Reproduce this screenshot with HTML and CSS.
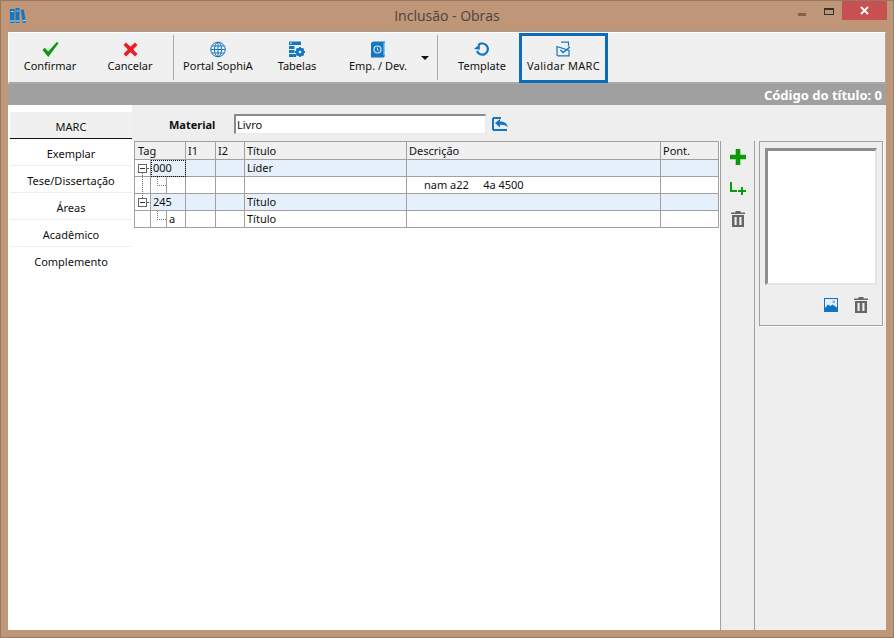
FILE: index.html
```html
<!DOCTYPE html>
<html lang="pt">
<head>
<meta charset="utf-8">
<title>Inclusão - Obras</title>
<link rel="stylesheet" href="styles.css">
</head>
<body>
<div class="window">
  <header class="titlebar">
    <svg class="app-icon" width="16" height="16" viewBox="0 0 16 16"><path fill="#1577c2" d="M0 1h4.500v14H0zM5.500 0H9.500v15H5.500zM10.800 2l3-.5 2.200 13-3.200.5z"/><path fill="#bfe0f5" d="M0 12.500h4.500v1H0zM5.500 12.500h4v1h-4zM12.500 12.300l3.200-.5.200 1-3.200.5zM1 3h2.500v1H1zM6.500 2.500h2v1h-2z"/></svg>
    <div class="title">Inclusão - Obras</div>
    <div class="controls">
      <span class="ctl-min"></span>
      <span class="ctl-max"></span>
      <span class="ctl-close"><svg width="9" height="9" viewBox="0 0 9 9"><path d="M1 1l7 7M8 1l-7 7" stroke="#fff" stroke-width="1.800"/></svg></span>
    </div>
  </header>
  <div class="client">
    <nav class="toolbar">
      <button class="tb w80"><svg width="17" height="17" viewBox="0 0 17 17"><path fill="#0a9a0a" d="M0.500 9l2.300-2.200 3.400 3.600L15 .8l1.500 1.400L6.300 16z"/></svg><span>Confirmar</span></button>
      <button class="tb w80"><svg width="15" height="15" viewBox="0 0 15 15"><path fill="#ee1c25" d="M3 .5l4.500 4.300L12 .5 14.500 3 10.200 7.500l4.300 4.500-2.500 2.500-4.500-4.300L3 14.500.5 12l4.300-4.500L.5 3z"/></svg><span>Cancelar</span></button>
      <i class="sep"></i>
      <button class="tb w80"><svg width="16" height="16" viewBox="0 0 16 16" fill="none" stroke="#1577c2" stroke-width="1"><circle cx="8" cy="8" r="7.300"/><ellipse cx="8" cy="8" rx="3.500" ry="7.300"/><path d="M8 .7v14.600M.7 8h14.600M1.800 4.500h12.400M1.800 11.500h12.400"/></svg><span>Portal SophiA</span></button>
      <button class="tb w78"><svg width="16" height="16" viewBox="0 0 16 16"><path fill="#1577c2" d="M0 0h12v3.500H0zM0 4.500h5.500V7.500H0zM0 8.500h5.500v3H0zM0 12.500h7v3H0z"/><path fill="#cfe6f6" d="M1 1h2v1H1z"/><circle cx="11" cy="10.500" r="3" fill="none" stroke="#1577c2" stroke-width="2.400"/><path stroke="#1577c2" stroke-width="1.800" d="M11 5.500v10M6 10.500h10M7.500 7l7 7M14.500 7l-7 7"/><circle cx="11" cy="10.500" r="1.300" fill="#f0f0f0"/></svg><span>Tabelas</span></button>
      <button class="tb w84"><svg width="14" height="16" viewBox="0 0 14 16"><path fill="#1577c2" d="M0 1.500L2 0h12v14l-1 2H0z"/><path fill="#8fc4ea" d="M12.500 1H14v13h-1.500z"/><circle cx="6.500" cy="8" r="3.500" fill="none" stroke="#cfe6f6" stroke-width="1.200"/><path stroke="#cfe6f6" d="M6.500 6v2.500H8"/></svg><span>Emp. / Dev.</span></button>
      <i class="caret"></i>
      <i class="sep sep-b"></i>
      <button class="tb tmpl"><svg width="16" height="16" viewBox="0 0 16 16" fill="none"><path d="M4.300 3.600A5.600 5.600 0 1 1 3 9.500" stroke="#1577c2" stroke-width="2.200"/><path fill="#1577c2" d="M0 7.500L5.800 2.500v5.800z"/></svg><span>Template</span></button>
      <button class="tb validar"><svg width="16" height="16" viewBox="0 0 16 16" fill="none" stroke="#1577c2" stroke-width="1.200"><path d="M5 .7h7.500v4.300M13 9v5.300H2a1 1 0 0 1-1-1V5z"/><path d="M4.500 8.500l2.500 2.500L14 5.500" stroke-width="1.500"/></svg><span>Validar MARC</span></button>
    </nav>
    <div class="codebar">Código do título: 0</div>
    <div class="body">
      <aside class="tabs">
        <div class="tab active">MARC</div>
        <div class="tab">Exemplar</div>
        <div class="tab">Tese/Dissertação</div>
        <div class="tab">Áreas</div>
        <div class="tab">Acadêmico</div>
        <div class="tab">Complemento</div>
      </aside>
      <main class="main">
        <div class="material">
          <label class="mat-label">Material</label>
          <div class="mat-input">Livro</div>
          <svg class="mat-icon" width="17" height="14" viewBox="0 0 17 14"><path fill="none" stroke="#1577c2" stroke-width="2" d="M1 1h8M1 1v12M1 13h14"/><path fill="#1577c2" d="M3 6l5-4v2.500c4 0 7 1.500 8 6-1.500-2-4-2.800-8-2.600V10.500z"/></svg>
        </div>
        <div class="workarea">
          <div class="gridwrap">
            <table class="grid">
              <colgroup><col class="c0"><col class="c1"><col class="c2"><col class="c3"><col class="c4"><col class="c5"><col class="c6"><col class="c7"></colgroup>
              <thead>
                <tr><th colspan="3">Tag</th><th>I1</th><th>I2</th><th>Título</th><th>Descrição</th><th>Pont.</th></tr>
              </thead>
              <tbody>
                <tr class="parent"><td class="tree"><span class="expander"></span></td><td colspan="2" class="focus"><span>000</span></td><td></td><td></td><td>Líder</td><td></td><td></td></tr>
                <tr><td></td><td class="branch"></td><td></td><td></td><td></td><td></td><td class="desc">nam a22&nbsp;&nbsp;&nbsp;&nbsp;&nbsp;4a 4500</td><td></td></tr>
                <tr class="parent"><td class="tree"><span class="expander"></span></td><td colspan="2">245</td><td></td><td></td><td>Título</td><td></td><td></td></tr>
                <tr><td></td><td class="branch"></td><td class="sub">a</td><td></td><td></td><td>Título</td><td></td><td></td></tr>
              </tbody>
            </table>
            <i class="tree-line"></i>
          </div>
          <div class="actions">
            <svg width="16" height="16" viewBox="0 0 16 16"><path fill="#0a9a0a" d="M5.700 0h4.600v5.700H16v4.600h-5.700V16H5.700v-5.700H0V5.700h5.700z"/></svg>
            <svg class="act-child" width="16" height="13" viewBox="0 0 16 13"><path fill="#0a9a0a" d="M0 0h2v8h5v2H0zM11 5h2v3h3v2h-3v3h-2v-3H8V8h3z"/></svg>
            <svg class="act-trash" width="14" height="16" viewBox="0 0 14 16"><path fill="#666" d="M4.500 0h5v1.500H14V3H0V1.500h4.500zM1 4h12v12H1zM3.500 6v8h2.200V6zm4.800 0v8h2.200V6z"/></svg>
          </div>
          <div class="side">
            <div class="photo-box">
              <div class="photo"></div>
              <div class="photo-actions">
                <svg width="14" height="14" viewBox="0 0 14 14"><rect width="14" height="14" fill="#0f73c4"/><rect x="1" y="1" width="12" height="12" fill="#e3f0fa"/><path fill="#0f73c4" d="M1 10l3-3.500 2.500 1.500 2-1.500 4.500 3V13H1z"/><rect x="8.500" y="2.500" width="2.500" height="2.500" fill="#7fb4de"/></svg>
                <svg width="14" height="16" viewBox="0 0 14 16"><path fill="#666" d="M4.500 0h5v1.500H14V3H0V1.500h4.500zM1 4h12v12H1zM3.500 6v8h2.200V6zm4.800 0v8h2.200V6z"/></svg>
              </div>
            </div>
          </div>
        </div>
      </main>
    </div>
  </div>
</div>
</body>
</html>
```
FILE: styles.css
```css
* { box-sizing: border-box; }
html, body { margin: 0; height: 100%; }
body { font-family: "Noto Sans", "Liberation Sans", sans-serif; font-size: 11px; color: #101010; overflow: hidden; }
.window { width: 894px; height: 638px; background: #bf9677; border: 1px solid #98785f; display: flex; flex-direction: column; }
.titlebar { height: 30px; flex: none; display: flex; position: relative; }
.app-icon { margin: 7px 0 0 9px; }
.title { position: absolute; left: 0; right: 0; top: 5px; text-align: center; font-family: "Open Sans", sans-serif; font-size: 14px; line-height: 19px; color: #4b443e; }
.controls { margin-left: auto; margin-right: 6px; display: flex; height: 19px; align-items: flex-start; }
.ctl-min { width: 8px; height: 3px; background: #7d634f; margin-top: 12px; margin-right: 18px; }
.ctl-max { width: 10px; height: 7px; border: 1px solid #333; border-top-width: 2px; margin-top: 7px; margin-right: 8px; }
.ctl-close { width: 45px; height: 19px; background: #c75050; display: flex; align-items: center; justify-content: center; }
.client { flex: 1; margin: 0 7px 7px; background: #eee; border-top: 1px solid #a79a8e; display: flex; flex-direction: column; min-height: 0; }
.toolbar { height: 52px; flex: none; background: #f0f0f0; border: 1px solid #fff; border-bottom: 2px solid #a8a8a8; border-right: 1px solid #a8a8a8; display: flex; padding-left: 1px; align-items: stretch; }
.tb { background: none; border: 0; padding: 8px 0 0; margin: 0; font: inherit; color: #101010; display: flex; flex-direction: column; align-items: center; height: 49px; }
.tb svg { height: 17px; flex: none; }
.tb span { line-height: 15px; white-space: nowrap; }
.w80 { width: 80px; }
.w78 { width: 78px; }
.w84 { width: 84px; }
.tmpl { width: 76px; padding-left: 2px; }
.sep { width: 1px; height: 45px; margin: 2px 4px 0 3px; background: #a8a8a8; flex: none; }
.sep-b { margin-left: 8px; margin-right: 5px; }
.caret { width: 0; height: 0; margin: 23px 0 0 1px; border: 4px solid transparent; border-top: 4px solid #111; border-bottom: 0; flex: none; }
.validar { width: 89px; border: 3px solid #0b6cb8; padding-top: 5px; height: 50px; letter-spacing: .3px; }
.codebar { height: 21px; flex: none; background: #a0a0a0; color: #fff; font-weight: 700; font-size: 13px; line-height: 22px; text-align: right; padding-right: 4px; }
.body { flex: 1; display: flex; min-height: 0; }
.tabs { width: 124px; flex: none; background: #fff; padding: 7px 0 0 2px; }
.tab { height: 27px; line-height: 30px; text-align: center; border-bottom: 1px solid #eee; }
.tab:last-child { border-bottom: 0; }
.tab.active { background: #f0f0f0; border-bottom: 1px solid #111; }
.main { flex: 1; display: flex; flex-direction: column; min-width: 0; }
.material { height: 36px; flex: none; display: flex; align-items: center; padding: 2px 0 0 37px; }
.mat-label { font-weight: 700; width: 65px; }
.mat-input { width: 252px; height: 20px; background: #fff; border: 2px solid #8a8a8a; border-right: 1px solid #eaeaea; border-bottom: 1px solid #eaeaea; padding-left: 1px; line-height: 17px; }
.mat-icon { margin-left: 6px; }
.workarea { flex: 1; display: flex; min-height: 0; }
.gridwrap { width: 588px; flex: none; background: #fff; padding-left: 2px; position: relative; }
.grid { width: 584px; table-layout: fixed; border-collapse: collapse; border: 0; }
.c0 { width: 16px; } .c1 { width: 16px; } .c2 { width: 19px; } .c3 { width: 30px; } .c4 { width: 29px; } .c5 { width: 162px; } .c6 { width: 254px; } .c7 { width: 58px; }
.grid th { height: 18px; font-weight: 400; text-align: left; background: #f0f0f0; border: 1px solid #a0a0a0; border-left-color: #d8d8d8; padding: 0 0 0 2px; line-height: 15px; }
.grid th:first-child { border-left-color: #a0a0a0; padding-left: 3px; }
.grid td { height: 17px; border: 1px solid #a0a0a0; padding: 0 0 2px 2px; line-height: 13px; overflow: visible; white-space: nowrap; }
.grid tr.parent td { background: #e6f0fb; }
.grid tr.parent td.tree { background: #fff; }
.grid .desc { padding-left: 17px; }
.grid .sub { padding-left: 2px; }
.focus { outline: 1px dotted #111; outline-offset: -1px; }
.tree { position: relative; }
.expander { position: absolute; left: 3px; top: 4px; width: 9px; height: 9px; border: 1px solid #666; background: linear-gradient(#333,#333) center/5px 1px no-repeat #fff; }
.expander::after { content: ""; position: absolute; left: 8px; top: 3px; width: 4px; border-top: 1px dotted #666; }
.branch { position: relative; }
.branch::before { content: ""; position: absolute; left: 6px; top: 0; width: 8px; height: 8px; border-left: 1px dotted #777; border-bottom: 1px dotted #777; }
.tree-line { position: absolute; left: 10px; top: 32px; height: 25px; border-left: 1px dotted #666; }
.actions { width: 35px; flex: none; border-left: 1px solid #a0a0a0; border-right: 1px solid #a0a0a0; display: flex; flex-direction: column; align-items: center; padding-top: 8px; background: #eee; }
.act-child { margin-top: 17px; }
.act-trash { margin-top: 16px; }
.side { flex: 1; padding-left: 4px; }
.photo-box { width: 124px; height: 185px; border: 1px solid #a0a0a0; box-shadow: 1px 1px 0 #fff; padding: 6px 0 0 5px; }
.photo { width: 112px; height: 137px; background: #fff; border-style: solid; border-width: 3px 2px 2px 3px; border-color: #8e8e8e #e4e4e4 #e4e4e4 #8e8e8e; }
.photo-actions { display: flex; gap: 16px; justify-content: flex-end; align-items: center; margin-top: 12px; padding-right: 14px; }
```
